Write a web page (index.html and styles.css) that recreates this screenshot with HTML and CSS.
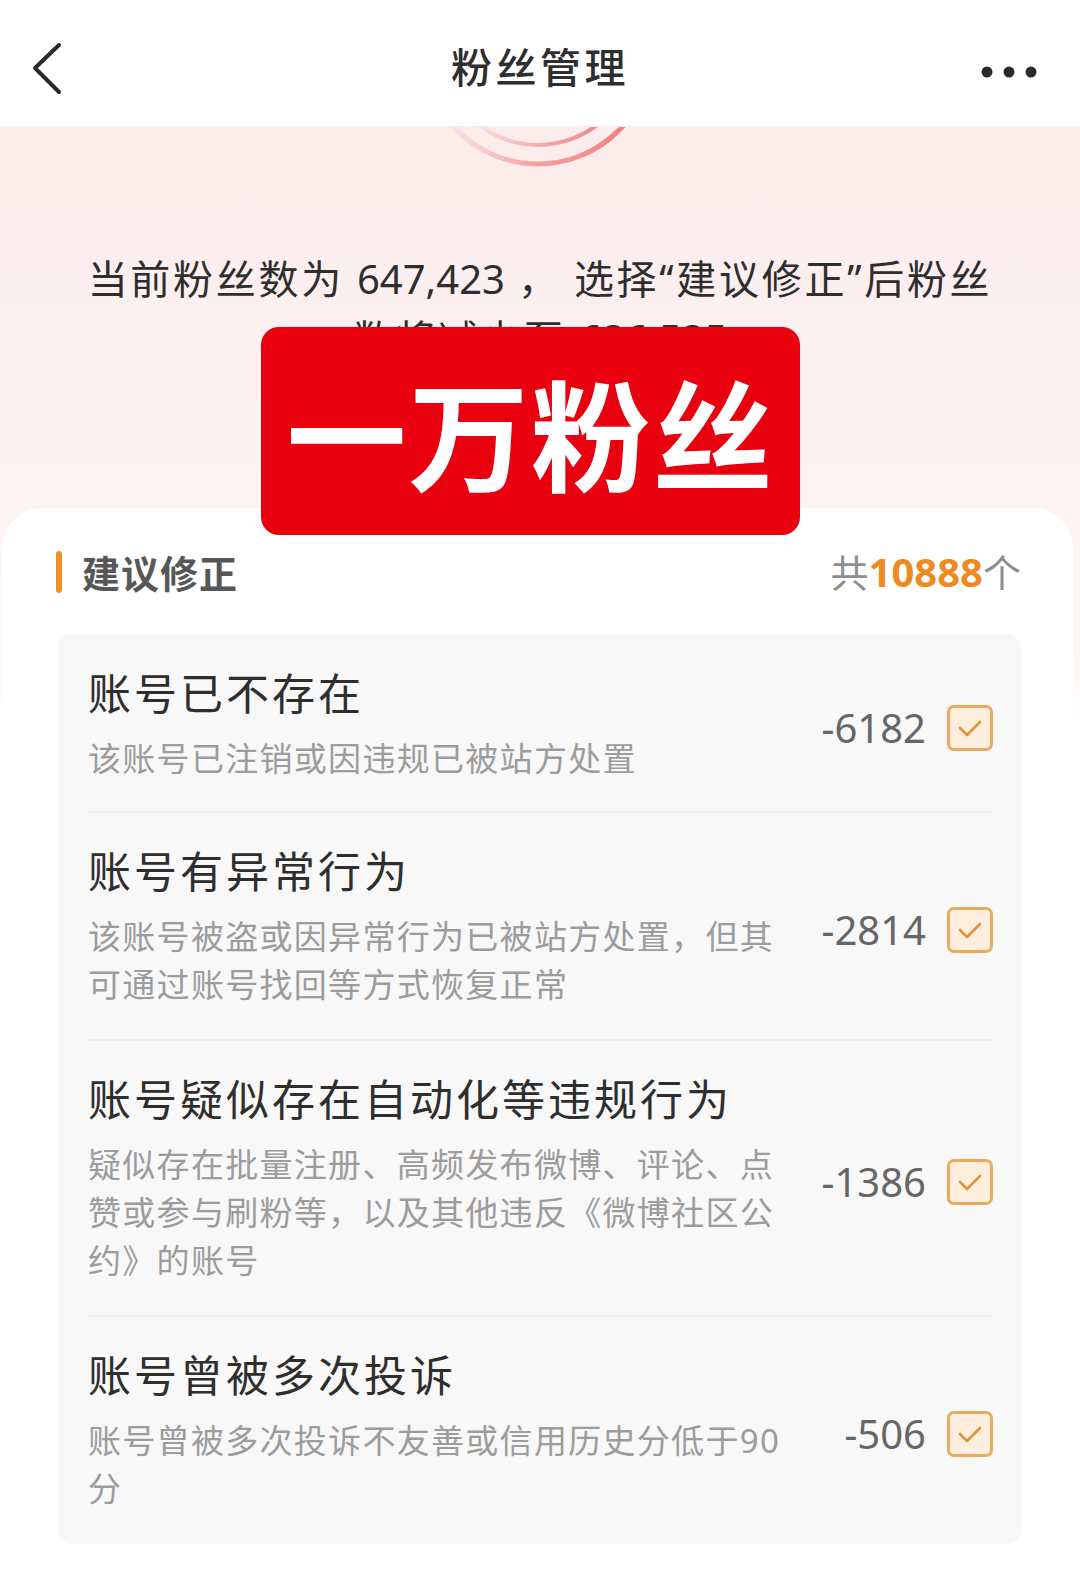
FILE: index.html
```html
<!DOCTYPE html>
<html lang="zh-CN">
<head>
  <meta charset="UTF-8">
  <meta name="viewport" content="width=device-width, initial-scale=1.0">
  <title>粉丝管理</title>
  <link rel="stylesheet" href="styles.css">
</head>
<body>

  <header class="topbar">
    <svg class="back" width="40" height="60" viewBox="0 0 40 60">
      <polyline points="28,3 4,26 28,50" fill="none" stroke="#2a2a2a" stroke-width="4" stroke-linecap="round" stroke-linejoin="round"/>
    </svg>
    <h1 class="title">粉丝管理</h1>
    <svg class="more" width="60" height="20" viewBox="0 0 60 20">
      <circle cx="8" cy="10" r="5.5" fill="#2a2a2a"/>
      <circle cx="30" cy="10" r="5.5" fill="#2a2a2a"/>
      <circle cx="52" cy="10" r="5.5" fill="#2a2a2a"/>
    </svg>
  </header>

  <main class="content">
    <section class="hero">
      <!-- ripple under the header -->
      <svg class="ripple" width="240" height="45" viewBox="0 0 240 45">
        <defs>
          <linearGradient id="outerGrad" gradientUnits="userSpaceOnUse" x1="30" y1="0" x2="210" y2="0">
            <stop offset="0" stop-color="#fde3e3"/>
            <stop offset="0.5" stop-color="#f4a0a0"/>
            <stop offset="1" stop-color="#ef8080"/>
          </linearGradient>
          <linearGradient id="innerGrad" gradientUnits="userSpaceOnUse" x1="60" y1="0" x2="180" y2="0">
            <stop offset="0" stop-color="#fbe0e0"/>
            <stop offset="0.5" stop-color="#f2aaaa"/>
            <stop offset="1" stop-color="#ee8b8b"/>
          </linearGradient>
        </defs>
        <circle cx="119" cy="-77" r="114" fill="none" stroke="url(#outerGrad)" stroke-width="5"/>
        <circle cx="119" cy="-79" r="97" fill="none" stroke="url(#innerGrad)" stroke-width="4"/>
      </svg>
      <p class="summary">当前粉丝数为 <span class="digits">647,423</span> ， 选择“建议修正”后粉丝数将减少至 <span class="digits">636,535</span></p>
    </section>

    <div class="banner">一万粉丝</div>

    <section class="card">
      <div class="card-head">
        <div class="card-title"><span class="mark"></span>建议修正</div>
        <div class="card-total">共<span class="num">10888</span>个</div>
      </div>

      <div class="list" id="list"></div>
    </section>
  </main>

  <script>
    const reasons = [
      { title: '账号已不存在', desc: '该账号已注销或因违规已被站方处置', count: 6182 },
      { title: '账号有异常行为', desc: '该账号被盗或因异常行为已被站方处置，但其可通过账号找回等方式恢复正常', count: 2814 },
      { title: '账号疑似存在自动化等违规行为', desc: '疑似存在批量注册、高频发布微博、评论、点赞或参与刷粉等，以及其他违反《微博社区公约》的账号', count: 1386 },
      { title: '账号曾被多次投诉', desc: '账号曾被多次投诉不友善或信用历史分低于90分', count: 506 },
    ];

    const list = document.getElementById('list');

    reasons.forEach(item => {
      const row = document.createElement('div');
      row.className = 'item';
      row.innerHTML = `
        <div class="item-text">
          <div class="item-title">${item.title}</div>
          <div class="item-desc">${item.desc}</div>
        </div>
        <div class="item-count">-${item.count}</div>
        <span class="check">
          <svg width="46" height="46" viewBox="0 0 46 46">
            <polyline points="13,23 20,30 33,17" fill="none" stroke="#e3923c" stroke-width="2.6" stroke-linecap="round" stroke-linejoin="round"/>
          </svg>
        </span>
      `;
      list.appendChild(row);
    });
  </script>

</body>
</html>
```

FILE: styles.css
```css
body {
  margin: 0;
  background-color: #fff;
  font-family: "Noto Sans", "Noto Sans CJK SC", sans-serif;
  color: #333;
}
.topbar {
  height: 118px;
  padding: 8px 41px 0 31px;
  border-bottom: 1px solid #ececec;
  background-color: #fff;
  display: flex;
  align-items: center;
  justify-content: space-between;
  position: relative;
  z-index: 2;
}
.back {
  margin-top: 10px;
}
.title {
  margin: 0;
  font-size: 41px;
  font-weight: 500;
  letter-spacing: 3.5px;
  color: #2e2e2e;
  position: absolute;
  left: 0;
  right: 0;
  top: 35px;
  text-align: center;
  pointer-events: none;
}
.more {
  margin-top: 10px;
}
.content {
  position: relative;
  background: linear-gradient(#fcecec 0, #fdf3f3 380px, #fdf5f5 520px, #fff 600px);
}
.hero {
  height: 381px;
  display: flex;
  flex-direction: column;
  align-items: center;
}
.ripple {
  display: block;
  margin-left: -2px;
}
.summary {
  margin: 77px 0 0;
  width: 930px;
  text-align: center;
  font-size: 40px;
  line-height: 60px;
  letter-spacing: 2.7px;
  color: #2e2e2e;
}
.summary .digits {
  letter-spacing: 0;
}
.banner {
  position: absolute;
  z-index: 1;
  left: 261px;
  top: 200px;
  width: 539px;
  height: 208px;
  border-radius: 18px;
  background-color: #e8000f;
  color: #fff;
  font-family: "Noto Sans CJK SC", sans-serif;
  font-size: 120px;
  font-weight: 700;
  letter-spacing: 2px;
  display: flex;
  align-items: center;
  justify-content: center;
}
.card {
  background-color: #fff;
  margin: 0 7px 0 2px;
  border-radius: 40px 40px 0 0;
  padding: 33px 52px 42px 56px;
}
.card-head {
  height: 60px;
  display: flex;
  align-items: center;
  justify-content: space-between;
  margin-bottom: 33px;
}
.card-title {
  display: flex;
  align-items: center;
  font-size: 38px;
  font-weight: 700;
  letter-spacing: 1px;
  color: #575757;
}
.mark {
  width: 6px;
  height: 42px;
  border-radius: 3px;
  background-color: #ea932c;
  margin: 2px 20px 0 -2px;
}
.card-total {
  font-size: 38px;
  color: #8e8e8e;
}
.card-total .num {
  color: #ef8a22;
  font-weight: 700;
  font-size: 40px;
}
.list {
  background-color: #f8f8f8;
  border-radius: 14px;
  padding: 0 28px 0 30px;
}
.item {
  display: flex;
  align-items: center;
  padding: 37px 0 30px;
  border-bottom: 2px solid #ececec;
}
.item:first-child {
  padding-top: 38px;
  padding-bottom: 28px;
}
.item:last-child {
  border-bottom: none;
  padding-bottom: 31px;
}
.item-text {
  width: 700px;
}
.item-title {
  font-size: 43px;
  line-height: 44px;
  letter-spacing: 3px;
  color: #2e2e2e;
}
.item-desc {
  margin-top: 19px;
  font-size: 33px;
  line-height: 48px;
  letter-spacing: 1.3px;
  color: #9c9c9c;
}
.item-count {
  flex: 1;
  text-align: right;
  font-size: 40px;
  color: #666;
  margin-right: 21px;
}
.check {
  width: 46px;
  height: 46px;
  box-sizing: border-box;
  border: 3px solid #eaa95c;
  border-radius: 7px;
  background-color: #fdeedd;
  display: flex;
  align-items: center;
  justify-content: center;
  flex-shrink: 0;
}
.check svg {
  display: block;
  margin: -3px;
}
```
